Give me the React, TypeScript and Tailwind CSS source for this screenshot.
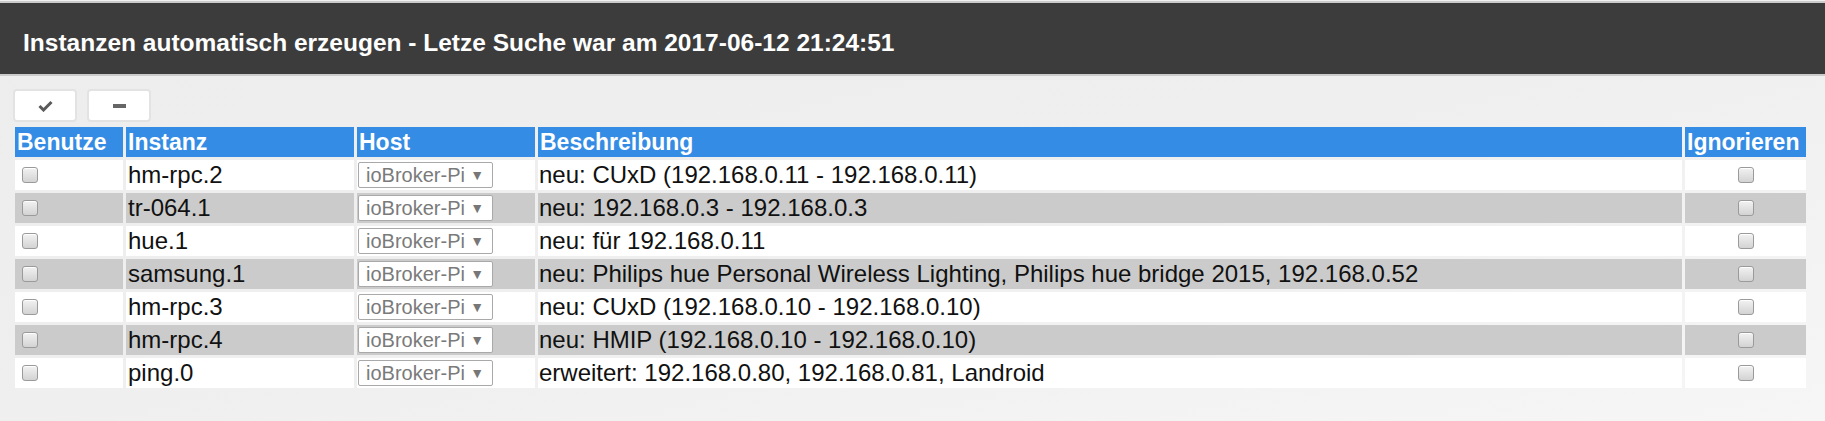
import { ReactNode } from "react";

interface Row {
  instance: string;
  description: string;
}

const rows: Row[] = [
  { instance: "hm-rpc.2", description: "neu: CUxD (192.168.0.11 - 192.168.0.11)" },
  { instance: "tr-064.1", description: "neu: 192.168.0.3 - 192.168.0.3" },
  { instance: "hue.1", description: "neu: für 192.168.0.11" },
  {
    instance: "samsung.1",
    description:
      "neu: Philips hue Personal Wireless Lighting, Philips hue bridge 2015, 192.168.0.52",
  },
  { instance: "hm-rpc.3", description: "neu: CUxD (192.168.0.10 - 192.168.0.10)" },
  { instance: "hm-rpc.4", description: "neu: HMIP (192.168.0.10 - 192.168.0.10)" },
  { instance: "ping.0", description: "erweitert: 192.168.0.80, 192.168.0.81, Landroid" },
];

function Checkbox() {
  return (
    <span className="block w-[16px] h-[16px] rounded-[3px] border border-[#9a9a9a] bg-gradient-to-b from-[#f2f2f2] to-[#d3d3d3] shadow-[inset_0_1px_0_#fff]" />
  );
}

function HostSelect() {
  return (
    <div className="ml-px flex items-center justify-between w-[135px] h-[26px] bg-white border border-[#a9a9a9] rounded-[2px] pl-[7px] pr-[8px] text-[20px] leading-none text-[#7a7a7a]">
      <span>ioBroker-Pi</span>
      <span className="text-[14px] text-[#777]">▼</span>
    </div>
  );
}

function ToolButton({ children }: { children: ReactNode }) {
  return (
    <button className="flex items-center justify-center w-[64px] h-[33px] bg-white border-2 border-[#e3e3e3] rounded-[4px]">
      {children}
    </button>
  );
}

function Th({ children }: { children: ReactNode }) {
  return (
    <th className="h-[30px] p-0 px-[2px] text-left font-bold text-[23px] leading-[30px] text-white bg-[#348ce4]">
      {children}
    </th>
  );
}

function Cell({ bg, className = "", children }: { bg: string; className?: string; children: ReactNode }) {
  return (
    <td className={`p-0 ${bg}`}>
      <div className={`h-[30px] flex items-center whitespace-nowrap ${className}`}>{children}</div>
    </td>
  );
}

export default function App() {
  return (
    <div className="w-[1825px] h-[421px] bg-gradient-to-br from-[#ededed] via-[#efefef] to-[#f6f6f6] font-['Liberation_Sans',Arial,sans-serif] overflow-hidden">
      <div className="pt-px bg-[#f0f0f0]">
        <div className="h-[75px] bg-[#3c3c3c] border-t-2 border-b-2 border-[#cbcbcb] flex items-center pl-[23px] pt-[10px]">
          <h1 className="text-[24.5px] font-bold text-white">
            Instanzen automatisch erzeugen - Letze Suche war am 2017-06-12 21:24:51
          </h1>
        </div>
      </div>

      <div className="flex gap-[10px] pl-[13px] pt-[13px]">
        <ToolButton>
          <svg width="15" height="12" viewBox="0 0 15 12">
            <path d="M1.5 6 L5.5 10 L13.5 2" fill="none" stroke="#5a5a5a" strokeWidth="3" />
          </svg>
        </ToolButton>
        <ToolButton>
          <span className="block w-[13px] h-[4px] bg-[#666]" />
        </ToolButton>
      </div>

      <table className="ml-[12px] mt-[2px] w-[1797px] table-fixed border-separate border-spacing-[3px]">
        <colgroup>
          <col className="w-[108px]" />
          <col className="w-[228px]" />
          <col className="w-[178px]" />
          <col className="w-[1144px]" />
          <col className="w-[121px]" />
        </colgroup>
        <thead>
          <tr>
            <Th>Benutze</Th>
            <Th>Instanz</Th>
            <Th>Host</Th>
            <Th>Beschreibung</Th>
            <Th>Ignorieren</Th>
          </tr>
        </thead>
        <tbody className="text-[24px] leading-none text-[#111]">
          {rows.map((row, i) => {
            const bg = i % 2 === 0 ? "bg-white" : "bg-[#cbcbcb]";
            return (
              <tr key={row.instance}>
                <Cell bg={bg} className="pl-[7px]">
                  <Checkbox />
                </Cell>
                <Cell bg={bg} className="px-[2px]">
                  {row.instance}
                </Cell>
                <Cell bg={bg}>
                  <HostSelect />
                </Cell>
                <Cell bg={bg} className="px-[1px]">
                  {row.description}
                </Cell>
                <Cell bg={bg} className="justify-center">
                  <Checkbox />
                </Cell>
              </tr>
            );
          })}
        </tbody>
      </table>
    </div>
  );
}
